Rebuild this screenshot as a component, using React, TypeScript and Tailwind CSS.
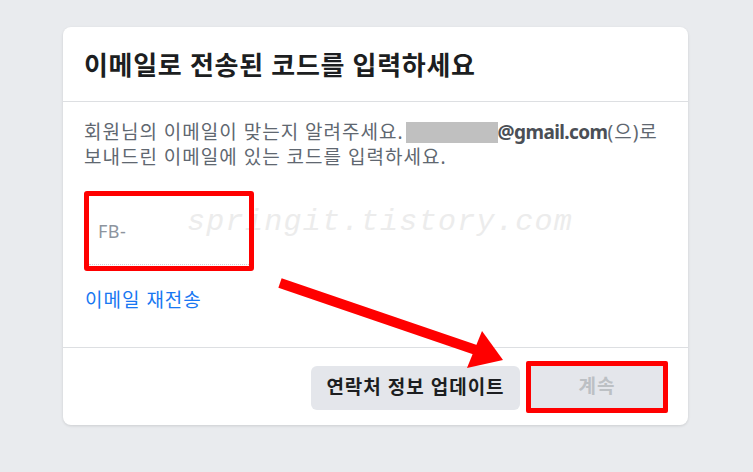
import React from "react";

export default function App() {
  return (
    <div className="relative w-[753px] h-[472px] overflow-hidden bg-[#e9ebee] pt-[27px] pl-[63px] font-['Noto_Sans','Noto_Sans_CJK_KR',sans-serif]">
      <div className="w-[625px] h-[398px] bg-white rounded-[8px] shadow-[0_1px_3px_rgba(0,0,0,0.12)] flex flex-col">
        {/* header */}
        <div className="h-[75px] shrink-0 pl-[21px] pt-[21px] border-b border-[#dddfe2]">
          <h1 className="text-[26px] leading-[34px] font-bold text-[#1c1e21] tracking-[0.7px]">
            이메일로 전송된 코드를 입력하세요
          </h1>
        </div>
        {/* body */}
        <div className="h-[246px] shrink-0 pl-[21px] pt-[18px] flex flex-col items-start border-b border-[#dddfe2]">
          <p className="text-[19px] leading-[25px] text-[#606770] tracking-[1px]">
            회원님의 이메일이 맞는지 알려주세요.
            <span className="inline-block align-middle w-[92px] h-[21px] bg-[#c0c0c0] -mt-[3px] ml-[2px]"></span>
            <span className="font-bold text-[#4b4f56] tracking-[-0.6px]">@gmail.com</span>(으)로
            <br />
            보내드린 이메일에 있는 코드를 입력하세요.
          </p>
          <div className="relative z-10 mt-[21px] w-[170px] h-[80px] border-[5px] border-[#ff0000] rounded-[3px] bg-transparent flex items-center pl-[9px]">
            <span className="text-[18px] text-[#8d949e] tracking-[0.5px]">FB-</span>
            <div className="absolute left-0 right-0 bottom-[1px] border-b border-dotted border-[#d0d2d6]"></div>
          </div>
          <a className="mt-[17px] text-[19px] leading-[25px] text-[#1877f2] tracking-[1px] pl-[1px] cursor-pointer">
            이메일 재전송
          </a>
        </div>
        {/* footer */}
        <div className="flex-1 flex items-center justify-end gap-[6px] pr-[20px]">
          <button className="h-[44px] w-[209px] rounded-[6px] bg-[#e4e6eb] text-[19px] font-bold text-[#1c1e21] tracking-[1px] mt-[2px]">
            연락처 정보 업데이트
          </button>
          <div className="w-[142px] h-[52px] border-[5px] border-[#ff0000] rounded-[2px] bg-[#e4e6eb] flex items-center justify-center">
            <span className="text-[19px] font-bold text-[#bcc0c4] tracking-[1px]">계속</span>
          </div>
        </div>
      </div>

      {/* watermark */}
      <div className="absolute left-[187px] top-[207px] text-[30px] leading-[30px] italic font-light text-[#ececec] tracking-[1.3px] font-['Liberation_Mono',monospace] pointer-events-none">
        springit.tistory.com
      </div>

      {/* arrow annotation */}
      <svg className="absolute left-0 top-0 pointer-events-none" width="753" height="472" viewBox="0 0 753 472">
        <line x1="280" y1="283" x2="476" y2="350" stroke="#ff0000" strokeWidth="10" strokeLinecap="butt" />
        <polygon points="482,331 503,360 467,368" fill="#ff0000" />
      </svg>
    </div>
  );
}
